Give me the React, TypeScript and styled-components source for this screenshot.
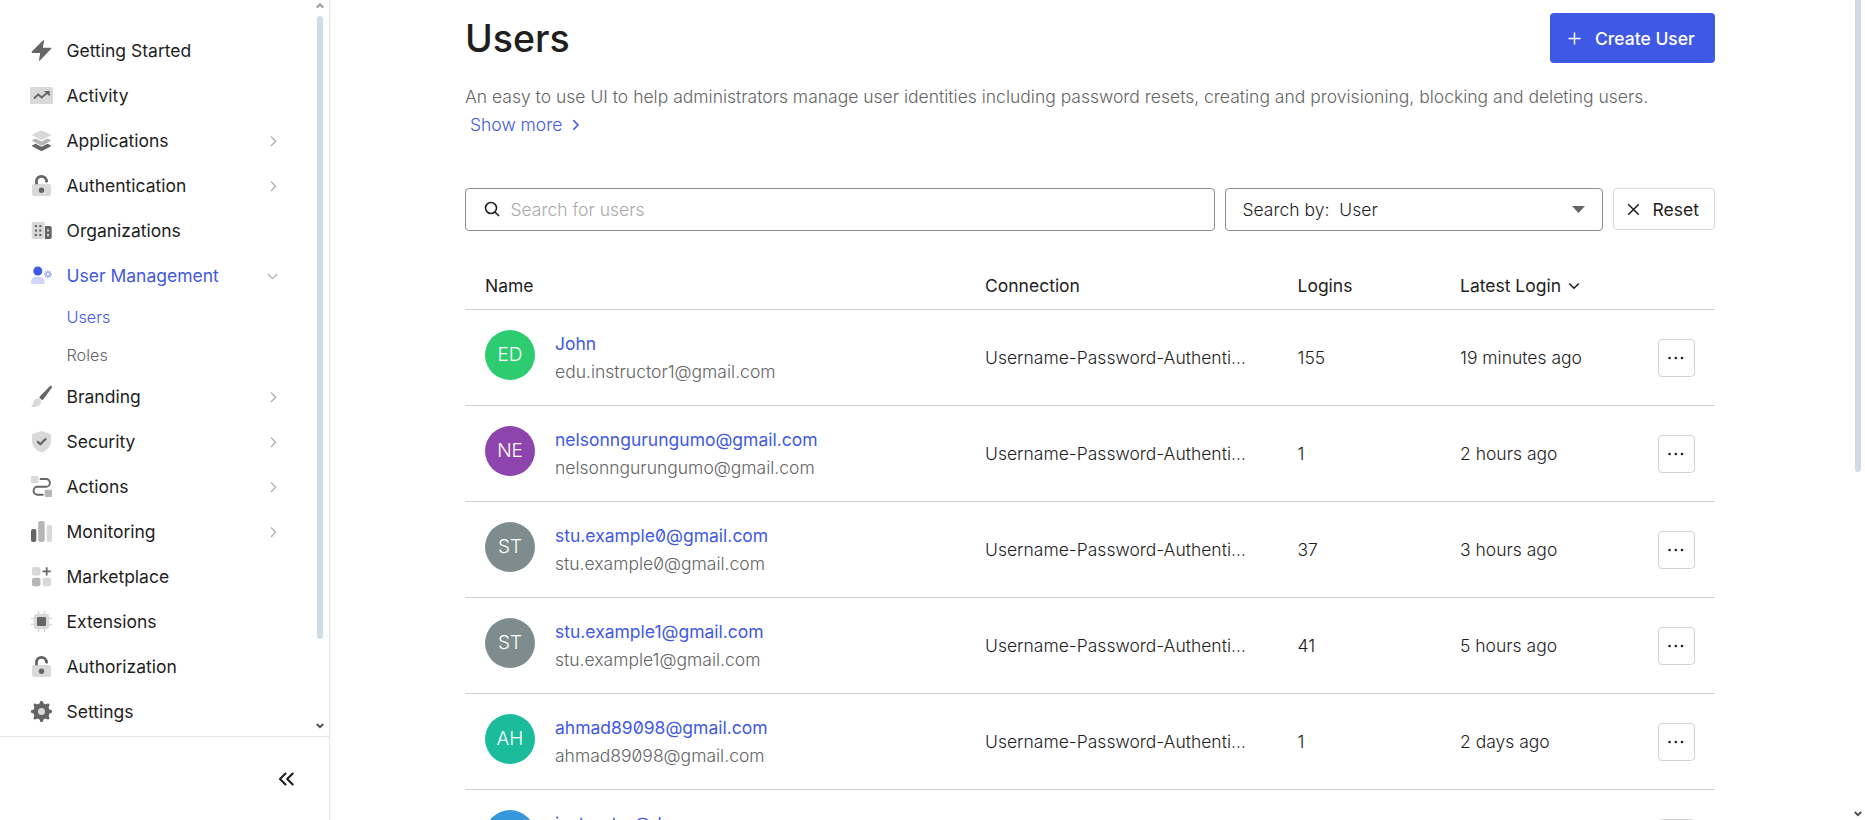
import React from 'react';
import styled, { createGlobalStyle } from 'styled-components';

const GlobalStyle = createGlobalStyle`
  * { box-sizing: border-box; }
  html, body { margin: 0; height: 100%; overflow: hidden; }
  body {
    font-family: Inter, "Liberation Sans", sans-serif;
    font-size: 17.5px;
    line-height: 28px;
    color: #1e1e1e;
    background: #fff;
    font-optical-sizing: none;
    font-variation-settings: "opsz" 14;
    font-feature-settings: "zero" 1;
  }
  button { font-variation-settings: inherit; font-optical-sizing: inherit; }
`;

const DARK = '#656565';
const MID = '#b6b6b6';
const LIGHT = '#d9d9d9';
const BLUE = '#3f59e4';

const Page = styled.div`
  display: flex;
  height: 820px;
  overflow: hidden;
`;

const Sidebar = styled.aside`
  display: flex;
  flex-direction: column;
  width: 330px;
  flex: none;
  border-right: 1px solid #e3e3e3;
`;

const SidebarScroll = styled.div`
  display: flex;
  flex: none;
  height: 736px;
  overflow: hidden;
`;

const Nav = styled.nav`
  flex: 1;
  padding-top: 28px;
`;

const NavItem = styled.a<{ $active?: boolean }>`
  display: flex;
  align-items: center;
  height: 45px;
  padding: 0 35px 0 29px;
  color: ${p => (p.$active ? BLUE : '#1e1e1e')};
  text-decoration: none;
`;

const NavIcon = styled.svg`
  width: 25px;
  height: 25px;
  flex: none;
  margin-right: 12.5px;
`;

const NavLabel = styled.span`
  flex: 1;
`;

const SubNav = styled.div`
  padding-left: 66.5px;
`;

const SubItem = styled.a<{ $active?: boolean }>`
  display: flex;
  align-items: center;
  height: 38px;
  font-size: 16.25px;
  font-weight: 300;
  color: ${p => (p.$active ? BLUE : '#656565')};
`;

const Track = styled.div`
  display: flex;
  flex-direction: column;
  align-items: center;
  justify-content: space-between;
  width: 14px;
  flex: none;
  padding-bottom: 3px;
`;

const Thumb = styled.div<{ $height: number; $top?: boolean }>`
  width: 6px;
  height: ${p => p.$height}px;
  border-radius: ${p => (p.$top ? '0 0 3px 3px' : '3px')};
  background: #d1dbe3;
`;

const SidebarTrack = styled(Track)`
  justify-content: flex-start;
  padding-top: 3px;
  margin-right: 2px;
`;

const SidebarThumb = styled(Thumb)`
  margin: 7px 0 84px;
`;

const SidebarFooter = styled.div`
  display: flex;
  flex: 1;
  align-items: center;
  justify-content: flex-end;
  padding: 0 34px 0 0;
  border-top: 1px solid #e3e3e3;
`;

const Main = styled.main`
  flex: 1;
  display: flex;
  justify-content: space-between;
`;

const Content = styled.div`
  width: 1250px;
  margin-left: 135px;
  padding-top: 13px;
`;

const Header = styled.header`
  display: flex;
  justify-content: space-between;
  height: 50px;
  margin-bottom: 20px;
`;

const Title = styled.h1`
  margin: 0;
  padding-top: 1px;
  font-size: 37.5px;
  line-height: 50px;
  font-weight: 500;
  color: #1e1e1e;
`;

const CreateButton = styled.button`
  display: flex;
  align-items: center;
  gap: 14px;
  width: 165px;
  height: 50px;
  padding: 0 0 0 18px;
  border: 0;
  border-radius: 4px;
  background: ${BLUE};
  color: #fff;
  font-family: inherit;
  font-size: 17.5px;
  font-weight: 500;
  white-space: nowrap;
`;

const Description = styled.p`
  margin: 0 0 49px;
  font-weight: 300;
  color: #656565;
`;

const ShowMore = styled.a`
  display: flex;
  align-items: center;
  gap: 10px;
  padding-left: 5px;
  color: ${BLUE};
`;

const Filters = styled.div`
  display: flex;
  align-items: flex-start;
  gap: 10px;
  height: 43px;
  margin-bottom: 30px;
  font-weight: 300;
`;

const SearchBox = styled.div`
  display: flex;
  align-items: center;
  gap: 10px;
  width: 750px;
  height: 43px;
  padding-left: 17.5px;
  border: 1px solid #8f8f8f;
  border-radius: 4px;
  color: #a9a9a9;
`;

const SelectBox = styled.div`
  display: flex;
  align-items: center;
  gap: 10px;
  width: 378px;
  height: 43px;
  padding: 0 17px 0 16.5px;
  border: 1px solid #8f8f8f;
  border-radius: 4px;
  svg { margin-left: auto; }
`;

const ResetButton = styled.button`
  display: flex;
  align-items: center;
  gap: 13px;
  width: 102px;
  height: 42px;
  padding: 1px 0 0 12.5px;
  border: 1px solid #d9d9d9;
  border-radius: 4px;
  background: #fff;
  color: #1e1e1e;
  font-family: inherit;
  font-size: 17.5px;
  font-weight: 400;
`;

const Row = styled.div`
  display: grid;
  grid-template-columns: 500px 312.5px 162.5px 1fr 57px;
  height: 96px;
  border-bottom: 1px solid #d3d3d3;
  font-weight: 300;
`;

const HeadRow = styled(Row)`
  height: 49px;
  padding-top: 1px;
  font-weight: 400;
`;

const Cell = styled.div`
  display: flex;
  align-items: center;
  gap: 6px;
  padding: 0 20px;
  min-width: 0;
  white-space: nowrap;
`;

const UserCell = styled(Cell)`
  align-items: flex-start;
  gap: 20px;
  padding-top: 20px;
`;

const Avatar = styled.div<{ $color: string }>`
  width: 50px;
  height: 50px;
  flex: none;
  border-radius: 50%;
  background: ${p => p.$color};
  color: #fff;
  font-size: 19px;
  line-height: 50px;
  text-align: center;
`;

const UserName = styled.div`
  font-weight: 400;
  color: ${BLUE};
`;

const Email = styled.div`
  color: #656565;
`;

const ActionCell = styled.div`
  display: flex;
  align-items: center;
`;

const MoreButton = styled.button`
  display: flex;
  align-items: center;
  justify-content: center;
  width: 37px;
  height: 38px;
  padding: 0 1px 0 0;
  border: 1px solid #d3d3d3;
  border-radius: 4px;
  background: #fff;
`;

const LockIcon = (
  <>
    <rect x="3" y="11" width="19" height="12" rx="2" fill={LIGHT} />
    <path d="M7.500 11.200V8.400a5 5 0 0 1 10-.2" stroke={DARK} strokeWidth="2.800" fill="none" strokeLinecap="butt" />
    <path d="M17.500 7.900v.4" stroke={DARK} strokeWidth="2.800" strokeLinecap="round" />
    <circle cx="12.500" cy="17.300" r="2.700" fill={DARK} />
  </>
);

const teeth = [0, 45, 90, 135, 180, 225, 270, 315];

const icons: Record<string, React.ReactNode> = {
  bolt: <path d="M14.100 2.200c.4-.4 1-.2.9.5L13.900 9.700h7.400c1 0 1.300.7.700 1.300L10.900 22.600c-.4.4-1 .2-.9-.4l1.200-7.200H3.500c-.8 0-1.200-.8-.6-1.400z" fill={DARK} />,
  activity: (
    <>
      <rect x="1" y="4" width="23" height="17" rx="1.600" fill={LIGHT} />
      <path d="M4.900 15.500L9.300 11.500l3.400 3L18 9.800" stroke={DARK} strokeWidth="1.800" fill="none" />
      <path d="M15 8h5.700v5.600z" fill={DARK} />
    </>
  ),
  layers: (
    <>
      <path d="M3 17.600l3.500-1.900 6 3 6-3 3.500 1.900-.4.800-8.200 4.300q-.9.400-1.800 0L3.400 18.400z" fill={DARK} />
      <path d="M3 12.300l3.500-1.900 6 3 6-3 3.500 1.900-.4.800-8.200 4.300q-.9.400-1.800 0L3.400 13.100z" fill={MID} />
      <path d="M3 7l.4-.5 8.200-4.100q.9-.4 1.800 0l8.200 4.100.4.500-.4.600-8.200 4.200q-.9.400-1.800 0L3.400 7.600z" fill={LIGHT} />
    </>
  ),
  lock: LockIcon,
  building: (
    <>
      <rect x="2.700" y="4" width="13" height="17" rx="1.600" fill={LIGHT} />
      {[8, 12.500, 17].map(y => (
        <React.Fragment key={y}>
          <rect x="5.900" y={y - 1} width="2.100" height="2.100" fill={DARK} />
          <rect x="10.300" y={y - 1} width="2.100" height="2.100" fill={DARK} />
        </React.Fragment>
      ))}
      <path d="M16 8h5a1.700 1.700 0 0 1 1.700 1.700v9.600A1.700 1.700 0 0 1 21 21h-5z" fill={DARK} />
      <path d="M18 11.500h2v2h-2zM18 15.900h2v2h-2z" fill={LIGHT} />
    </>
  ),
  user: (
    <>
      <circle cx="8.800" cy="8" r="4.500" fill={BLUE} />
      <path d="M2 19.500c0-3.500 1.400-5.500 4.200-5.500h5.300c2.800 0 4.200 2 4.200 5.500 0 1-.6 1.500-1.500 1.500H3.500c-.9 0-1.500-.5-1.500-1.500z" fill="#cfd6f8" />
      <circle cx="18.900" cy="11.200" r="2" stroke="#a3b0f2" strokeWidth="1.500" fill="none" />
      {teeth.map(a => (
        <path key={a} d="M18.900 8.900V7.200" stroke="#a3b0f2" strokeWidth="1.400" transform={`rotate(${a} 18.900 11.200)`} />
      ))}
    </>
  ),
  brush: (
    <>
      <path d="M10.300 13L20.500 2.500c1-1 3-1 2.400 1L14.600 15c-.7 1-1.400 1.300-2.100.6l-1.900-1.700z" fill={DARK} />
      <path d="M2.200 22.500c2-1.500 1.800-3 2.500-5.200.8-2.400 3.300-3.300 5-2.700 2 .8 3 3 2.100 4.800-1.600 3.400-5.500 3.600-9.300 3.600z" fill={LIGHT} />
    </>
  ),
  shield: (
    <>
      <path d="M11.800 2.200q.7-.3 1.400 0l7.800 2.600q1 .4 1 1.400v5.300c0 6-3.800 9.700-8.800 11.400q-.7.200-1.400 0C6.800 21.200 3 17.500 3 11.500V6.200q0-1 1-1.400z" fill={LIGHT} />
      <path d="M8.200 12.200l3.100 3.100 5.800-5.800" stroke={DARK} strokeWidth="2.200" fill="none" />
    </>
  ),
  flow: (
    <>
      <rect x="2" y="2" width="7.300" height="7.200" rx="1" fill={LIGHT} />
      <rect x="15.700" y="15.800" width="7.300" height="7.200" rx="1" fill={MID} />
      <path d="M11.500 5H17a3.900 3.900 0 0 1 0 7.800H8.500a3.950 3.950 0 0 0 0 7.900H13.800" stroke={DARK} strokeWidth="1.900" fill="none" strokeLinecap="round" />
    </>
  ),
  bars: (
    <>
      <rect x="2" y="10" width="5.300" height="13" rx="2" fill={DARK} />
      <rect x="9.200" y="2" width="6.500" height="21" rx="2" fill={MID} />
      <rect x="17.700" y="6" width="5.300" height="17" rx="2" fill={LIGHT} />
    </>
  ),
  market: (
    <>
      <rect x="3" y="3" width="8.500" height="8.500" rx="2" fill={LIGHT} />
      <rect x="3" y="13.700" width="8.500" height="8.500" rx="2" fill={MID} />
      <rect x="13.600" y="13.700" width="8.500" height="8.500" rx="2" fill={LIGHT} />
      <path d="M17.700 3.200v8.200M13.600 7.300h8.200" stroke={DARK} strokeWidth="1.700" />
    </>
  ),
  chip: (
    <>
      <path d="M9.500 2v21M15.500 2v21M2 9.500h21M2 15.500h21" stroke={LIGHT} strokeWidth="1.600" />
      <rect x="4.800" y="4.800" width="15.400" height="15.400" rx="3.500" fill={LIGHT} />
      <rect x="8" y="8" width="9" height="9" rx="1.200" fill={DARK} />
    </>
  ),
  gear: (
    <>
      <circle cx="12.500" cy="12.500" r="8.200" fill={DARK} />
      {teeth.map(a => (
        <path key={a} d="M10.200 5.500L11.200 2.500q.1-.5.600-.5h1.400q.5 0 .6.500l1 3z" fill={DARK} transform={`rotate(${a} 12.500 12.500)`} />
      ))}
      <circle cx="12.500" cy="12.500" r="3.500" fill={LIGHT} />
    </>
  ),
};

type NavEntry = { label: string; icon: string; arrow?: 'right' | 'down'; children?: string[] };

const navigation: NavEntry[] = [
  { label: 'Getting Started', icon: 'bolt' },
  { label: 'Activity', icon: 'activity' },
  { label: 'Applications', icon: 'layers', arrow: 'right' },
  { label: 'Authentication', icon: 'lock', arrow: 'right' },
  { label: 'Organizations', icon: 'building' },
  { label: 'User Management', icon: 'user', arrow: 'down', children: ['Users', 'Roles'] },
  { label: 'Branding', icon: 'brush', arrow: 'right' },
  { label: 'Security', icon: 'shield', arrow: 'right' },
  { label: 'Actions', icon: 'flow', arrow: 'right' },
  { label: 'Monitoring', icon: 'bars', arrow: 'right' },
  { label: 'Marketplace', icon: 'market' },
  { label: 'Extensions', icon: 'chip' },
  { label: 'Authorization', icon: 'lock' },
  { label: 'Settings', icon: 'gear' },
];

const CONNECTION = 'Username-Password-Authenti…';

const users = [
  { initials: 'ED', color: '#2ecc71', name: 'John', email: 'edu.instructor1@gmail.com', logins: 155, latest: '19 minutes ago' },
  { initials: 'NE', color: '#8e44ad', name: 'nelsonngurungumo@gmail.com', email: 'nelsonngurungumo@gmail.com', logins: 1, latest: '2 hours ago' },
  { initials: 'ST', color: '#7f8c8d', name: 'stu.example0@gmail.com', email: 'stu.example0@gmail.com', logins: 37, latest: '3 hours ago' },
  { initials: 'ST', color: '#7f8c8d', name: 'stu.example1@gmail.com', email: 'stu.example1@gmail.com', logins: 41, latest: '5 hours ago' },
  { initials: 'AH', color: '#1abc9c', name: 'ahmad89098@gmail.com', email: 'ahmad89098@gmail.com', logins: 1, latest: '2 days ago' },
  { initials: 'IN', color: '#3498db', name: 'instructor@dev.com', email: 'instructor@dev.com', logins: 12, latest: '2 days ago' },
];

const NavArrow = ({ direction }: { direction: 'right' | 'down' }) => (
  <svg width="12" height="12" viewBox="0 0 12 12" fill="none" stroke="#b3b3b3" strokeWidth="1.4">
    <path d={direction === 'right' ? 'M5 1.500L9.600 6.300 5 11.100' : 'M1.800 4L6.500 8.600 11.200 4'} />
  </svg>
);

const ScrollArrow = ({ up }: { up?: boolean }) => (
  <svg width="8" height="6" viewBox="0 0 8 6" fill="none" stroke={up ? '#9a9a9a' : '#505050'} strokeWidth="2">
    <path d={up ? 'M.8 4.500L4 1.400 7.200 4.500' : 'M.8 1L4 4.200 7.200 1'} />
  </svg>
);

export default function App() {
  return (
    <Page>
      <GlobalStyle />
      <Sidebar>
        <SidebarScroll>
          <Nav>
            {navigation.map(item => (
              <React.Fragment key={item.label}>
                <NavItem $active={!!item.children}>
                  <NavIcon viewBox="0 0 25 25">{icons[item.icon]}</NavIcon>
                  <NavLabel>{item.label}</NavLabel>
                  {item.arrow && <NavArrow direction={item.arrow} />}
                </NavItem>
                {item.children && (
                  <SubNav>
                    {item.children.map((child, i) => (
                      <SubItem key={child} $active={i === 0}>{child}</SubItem>
                    ))}
                  </SubNav>
                )}
              </React.Fragment>
            ))}
          </Nav>
          <SidebarTrack>
            <ScrollArrow up />
            <SidebarThumb $height={623} />
            <ScrollArrow />
          </SidebarTrack>
        </SidebarScroll>
        <SidebarFooter>
          <svg width="18" height="16" viewBox="0 0 18 16" fill="none" stroke="#1e1e1e" strokeWidth="2.100" strokeLinecap="round" strokeLinejoin="round">
            <path d="M8.500 2.500L3 8l5.500 5.500M15.700 2.500L10.200 8l5.500 5.500" />
          </svg>
        </SidebarFooter>
      </Sidebar>
      <Main>
        <Content>
          <Header>
            <Title>Users</Title>
            <CreateButton>
              <svg width="13" height="13" viewBox="0 0 13 13" stroke="#fff" strokeWidth="1.500">
                <path d="M6.500 .5v12M.5 6.500h12" />
              </svg>
              Create User
            </CreateButton>
          </Header>
          <Description>
            An easy to use UI to help administrators manage user identities including password resets, creating and provisioning, blocking and deleting users.
            <ShowMore>
              Show more
              <svg width="8" height="12" viewBox="0 0 8 12" fill="none" stroke={BLUE} strokeWidth="1.600">
                <path d="M1.300 1.300L6 6l-4.700 4.700" />
              </svg>
            </ShowMore>
          </Description>
          <Filters>
            <SearchBox>
              <svg width="17" height="17" viewBox="0 0 17 17" fill="none" stroke="#1e1e1e" strokeWidth="1.600">
                <circle cx="7" cy="7" r="5.500" />
                <path d="M11 11l4 4" />
              </svg>
              Search for users
            </SearchBox>
            <SelectBox>
              <span>Search by:</span>
              <span>User</span>
              <svg width="13" height="7" viewBox="0 0 13 7" fill="#656565">
                <path d="M0 0h13L6.500 7z" />
              </svg>
            </SelectBox>
            <ResetButton>
              <svg width="13" height="13" viewBox="0 0 13 13" stroke="#1e1e1e" strokeWidth="1.500">
                <path d="M1.200 1.200l10.600 10.600M11.800 1.200L1.200 11.800" />
              </svg>
              Reset
            </ResetButton>
          </Filters>
          <HeadRow>
            <Cell>Name</Cell>
            <Cell>Connection</Cell>
            <Cell>Logins</Cell>
            <Cell>
              Latest Login
              <svg width="14" height="10" viewBox="0 0 14 10" fill="none" stroke="#1e1e1e" strokeWidth="1.600">
                <path d="M2.200 2.500L7 7.200l4.800-4.700" />
              </svg>
            </Cell>
          </HeadRow>
          {users.map(user => (
            <Row key={user.name}>
              <UserCell>
                <Avatar $color={user.color}>{user.initials}</Avatar>
                <div>
                  <UserName>{user.name}</UserName>
                  <Email>{user.email}</Email>
                </div>
              </UserCell>
              <Cell>{CONNECTION}</Cell>
              <Cell>{user.logins}</Cell>
              <Cell>{user.latest}</Cell>
              <ActionCell>
                <MoreButton>
                  <svg width="16" height="4" viewBox="0 0 16 4" fill="#1e1e1e">
                    <circle cx="1.600" cy="2" r="1.300" />
                    <circle cx="7.800" cy="2" r="1.300" />
                    <circle cx="14" cy="2" r="1.300" />
                  </svg>
                </MoreButton>
              </ActionCell>
            </Row>
          ))}
        </Content>
        <Track>
          <Thumb $height={472} $top />
          <ScrollArrow />
        </Track>
      </Main>
    </Page>
  );
}
